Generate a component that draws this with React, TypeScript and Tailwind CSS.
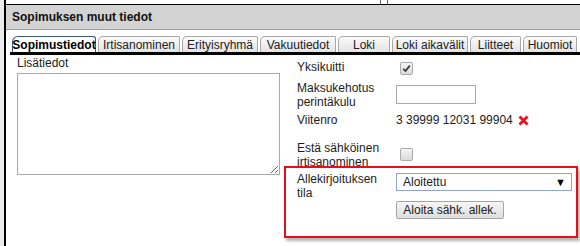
import React from 'react';

const tabs = [
  { label: 'Sopimustiedot', w: 'w-[84px]', active: true },
  { label: 'Irtisanominen', w: 'w-[82px]' },
  { label: 'Erityisryhmä', w: 'w-[76px]' },
  { label: 'Vakuutiedot', w: 'w-[76px]' },
  { label: 'Loki', w: 'w-[52px]' },
  { label: 'Loki aikavälit', w: 'w-[76px]' },
  { label: 'Liitteet', w: 'w-[51px]' },
  { label: 'Huomiot', w: 'w-[54px]' },
];

const Checkbox = ({ checked }: { checked?: boolean }) => (
  <span className="w-[13px] h-[13px] border border-[#ababab] rounded-[2px] bg-gradient-to-b from-[#f4f4f4] to-[#dadada] flex items-center justify-center">
    {checked && (
      <svg width="9" height="9" viewBox="0 0 9 9">
        <path d="M1.2 4.8 L3.5 7 L7.8 1.6" fill="none" stroke="#3a3a3a" strokeWidth="1.8" />
      </svg>
    )}
  </span>
);

export default function App() {
  return (
    <div className="w-[580px] h-[246px] flex bg-white overflow-hidden font-['Liberation_Sans',Arial,sans-serif] text-[12px] leading-[14px] text-[#1c1c1c]">
      <div className="w-[4px] shrink-0 bg-[#ececec]" />
      <div className="flex-1 min-w-0 border-l-2 border-black flex flex-col">
        {/* top strip */}
        <div className="h-[4px] flex shrink-0">
          <div className="ml-[374px] w-[8px] border-x border-[#666]" />
        </div>

        {/* header */}
        <div className="h-[26px] shrink-0 border-t border-t-black border-b border-b-[#a0a0a0] bg-[#d3d3d3] pl-[6px] flex items-center font-bold text-[#111]">
          Sopimuksen muut tiedot
        </div>

        {/* tabs */}
        <div className="pt-[6px] pl-[6px] flex gap-[2px] shrink-0">
          {tabs.map((t) =>
            t.active ? (
              <div
                key={t.label}
                className={`${t.w} h-[16px] border-t border-x border-[#3a5589] rounded-t-[6px] rounded-tr-[3px] bg-white font-bold text-black flex items-center justify-center`}
              >
                {t.label}
              </div>
            ) : (
              <div
                key={t.label}
                className={`${t.w} h-[16px] border-t border-x border-[#a8a8a8] rounded-t-[5px] rounded-tr-[2px] bg-gradient-to-b from-[#fbfbfb] to-[#e3e3e3] text-[#222] flex items-center justify-center`}
              >
                {t.label}
              </div>
            )
          )}
        </div>
        <div className="ml-[4px] h-[3px] bg-black shrink-0" />

        {/* content */}
        <div className="flex flex-1">
          <div className="w-[291px] shrink-0 pl-[11px]">
            <div className="mt-[1px]">Lisätiedot</div>
            <textarea className="mt-[3px] w-[263px] h-[102px] border border-[#a9a9a9] bg-white resize block outline-none" />
          </div>

          <div className="flex flex-col w-[281px]">
            <div className="mt-[5px] flex h-[14px]">
              <div className="w-[103px]">Yksikuitti</div>
              <div className="pt-[2px]"><Checkbox checked /></div>
            </div>

            <div className="mt-[7px] flex h-[28px]">
              <div className="w-[99px]">Maksukehotus<br />perintäkulu</div>
              <div className="mt-[4px] w-[80px] h-[19px] border border-[#a9a9a9] bg-white" />
            </div>

            <div className="mt-[4px] flex h-[14px] items-center">
              <div className="w-[99px]">Viitenro</div>
              <span className="text-[#1c1c1c]">3 39999 12031 99904</span>
              <svg className="ml-[5px]" width="11" height="11" viewBox="0 0 11 11">
                <path d="M1.5 1.5 L9.5 9.5 M9.5 1.5 L1.5 9.5" stroke="#e8111b" strokeWidth="2.8" strokeLinecap="butt" />
              </svg>
            </div>

            <div className="mt-[14px] flex h-[28px]">
              <div className="w-[103px]">Estä sähköinen<br />irtisanominen</div>
              <div className="pt-[7px]"><Checkbox /></div>
            </div>

            <div className="relative -mt-[3px] -ml-[13px] w-[294px] h-[72px] border-2 border-[#e3101a] bg-white shadow-[2px_3px_3px_rgba(0,0,0,0.3)] pl-[11px] pt-[4px] flex">
              <div className="w-[99px]">Allekirjoituksen<br />tila</div>
              <div className="flex flex-col">
                <div className="mt-[1px] w-[176px] h-[18px] border border-[#8fa3d8] bg-white flex items-center pl-[6px] pr-[5px]">
                  <span className="flex-1">Aloitettu</span>
                  <span className="text-[11px] leading-[11px] text-black">▼</span>
                </div>
                <div className="mt-[10px] w-[108px] h-[18px] border border-[#a5a5a5] rounded-[2px] bg-gradient-to-b from-[#f6f6f6] to-[#dedede] flex items-center justify-center">
                  Aloita sähk. allek.
                </div>
              </div>
            </div>
          </div>
        </div>
      </div>
    </div>
  );
}
